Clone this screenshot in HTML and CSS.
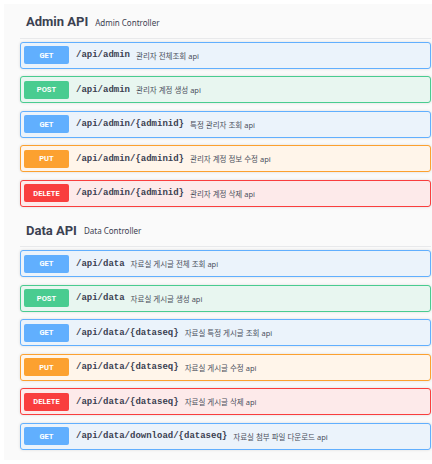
FILE: index.html
```html
<!DOCTYPE html>
<html lang="ko">
<head>
<meta charset="utf-8">
<link rel="stylesheet" href="styles.css">
</head>
<body>
<div class="wrap">
  <section class="tag">
    <h3 class="tag-head"><span class="tag-name">Admin API</span><span class="tag-desc">Admin Controller</span></h3>
    <div class="op get"><span class="badge">GET</span><span class="path">/api/admin</span><span class="desc">관리자 전체조회 api</span></div>
    <div class="op post"><span class="badge">POST</span><span class="path">/api/admin</span><span class="desc">관리자 계정 생성 api</span></div>
    <div class="op get"><span class="badge">GET</span><span class="path">/api/admin/{adminid}</span><span class="desc">특정 관리자 조회 api</span></div>
    <div class="op put"><span class="badge">PUT</span><span class="path">/api/admin/{adminid}</span><span class="desc">관리자 계정 정보 수정 api</span></div>
    <div class="op delete"><span class="badge">DELETE</span><span class="path">/api/admin/{adminid}</span><span class="desc">관리자 계정 삭제 api</span></div>
  </section>
  <section class="tag">
    <h3 class="tag-head"><span class="tag-name">Data API</span><span class="tag-desc">Data Controller</span></h3>
    <div class="op get"><span class="badge">GET</span><span class="path">/api/data</span><span class="desc">자료실 게시글 전체 조회 api</span></div>
    <div class="op post"><span class="badge">POST</span><span class="path">/api/data</span><span class="desc">자료실 게시글 생성 api</span></div>
    <div class="op get"><span class="badge">GET</span><span class="path">/api/data/{dataseq}</span><span class="desc">자료실 특정 게시글 조회 api</span></div>
    <div class="op put"><span class="badge">PUT</span><span class="path">/api/data/{dataseq}</span><span class="desc">자료실 게시글 수정 api</span></div>
    <div class="op delete"><span class="badge">DELETE</span><span class="path">/api/data/{dataseq}</span><span class="desc">자료실 게시글 삭제 api</span></div>
    <div class="op get"><span class="badge">GET</span><span class="path">/api/data/download/{dataseq}</span><span class="desc">자료실 첨부 파일 다운로드 api</span></div>
  </section>
</div>
</body>
</html>
```
FILE: styles.css
```css
html, body {
  margin: 0;
  padding: 0;
  background: #ffffff;
  overflow: hidden;
}
body {
  font-family: Roboto, "Noto Sans", "Noto Sans CJK KR", sans-serif;
  color: #3b4151;
}
.wrap {
  margin: 4px 0 0 4px;
  width: 428px;
  box-sizing: border-box;
  padding: 1.5px 1px 2.5px 16px;
  background: #fafafa;
}
.tag-head {
  margin: 0 0 3px 0;
  height: 32px;
  display: flex;
  align-items: center;
  gap: 7px;
  padding-left: 6px;
  border-bottom: 1px solid #e8e9eb;
}
.tag-name {
  font-family: Roboto, sans-serif;
  font-weight: 700;
  font-size: 13px;
  color: #3b4151;
}
.tag-desc {
  font-family: "Noto Sans", Roboto, sans-serif;
  font-weight: 400;
  font-size: 8px;
  color: #3b4151;
  padding-top: 1px;
}
.op {
  display: flex;
  align-items: center;
  height: 27px;
  box-sizing: border-box;
  padding: 0 3px;
  margin-bottom: 7.5px;
  border: 1px solid;
  border-radius: 3px;
  box-shadow: 0 0 3px rgba(0, 0, 0, 0.12);
}
.badge {
  width: 45px;
  height: 18px;
  border-radius: 2px;
  display: flex;
  align-items: center;
  justify-content: center;
  color: #fff;
  font-family: Roboto, sans-serif;
  font-weight: 700;
  font-size: 7.5px;
  flex: none;
}
.path {
  margin-left: 7px;
  font-family: "Liberation Mono", monospace;
  font-weight: 700;
  font-size: 9px;
  color: #3b4151;
}
.desc {
  margin-left: 6px;
  font-family: "Noto Sans", "Noto Sans CJK KR", sans-serif;
  font-size: 7.5px;
  color: #4a4f5c;
}
.get { background: #ebf3fb; border-color: #61affe; }
.get .badge { background: #61affe; }
.post { background: #e8f6f0; border-color: #49cc90; }
.post .badge { background: #49cc90; }
.put { background: #fff5ea; border-color: #fca130; }
.put .badge { background: #fca130; }
.delete { background: #fdeaea; border-color: #f93e3e; }
.delete .badge { background: #f93e3e; }
```
